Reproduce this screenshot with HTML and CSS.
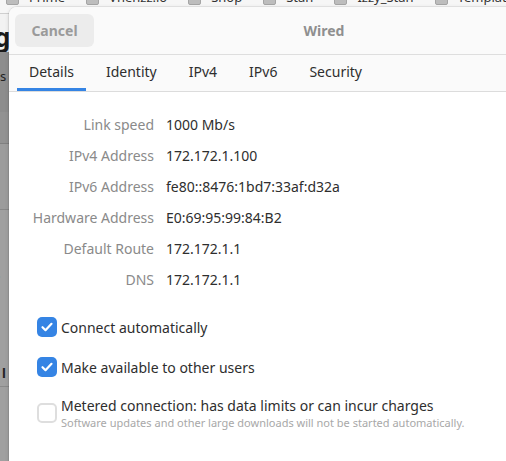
FILE: index.html
```html
<!DOCTYPE html>
<html>
<head>
<meta charset="utf-8">
<link rel="stylesheet" href="styles.css">
</head>
<body>
<div class="desk">
  <div class="bookmarks">
    <span class="bm"><i class="bm-icon"></i><span class="bm-text">Prime</span></span>
    <span class="bm"><i class="bm-icon"></i><span class="bm-text">Vhenzz.io</span></span>
    <span class="bm"><i class="bm-icon"></i><span class="bm-text">Shop</span></span>
    <span class="bm"><i class="bm-icon"></i><span class="bm-text">Stan</span></span>
    <span class="bm"><i class="bm-icon"></i><span class="bm-text">Izzy_Stan</span></span>
    <span class="bm"><i class="bm-icon"></i><span class="bm-text">Templates</span></span>
  </div>
  <div class="side">
    <div class="side-a"><span class="side-big">g</span></div>
    <div class="side-b"><span class="side-small">gs</span></div>
    <div class="side-c"></div>
    <div class="side-d"></div>
    <div class="side-e"><span class="side-small">s</span></div>
    <div class="side-f"><span class="side-small">l</span></div>
    <div class="side-g"></div>
  </div>

  <div class="dialog">
    <header class="header">
      <button class="cancel">Cancel</button>
      <div class="title">Wired</div>
    </header>
    <nav class="tabs">
      <span class="tab active">Details</span>
      <span class="tab">Identity</span>
      <span class="tab">IPv4</span>
      <span class="tab">IPv6</span>
      <span class="tab">Security</span>
    </nav>
    <main class="content">
      <div class="info">
        <span class="label">Link speed</span><span class="value">1000 Mb/s</span>
        <span class="label">IPv4 Address</span><span class="value">172.172.1.100</span>
        <span class="label">IPv6 Address</span><span class="value">fe80::8476:1bd7:33af:d32a</span>
        <span class="label">Hardware Address</span><span class="value">E0:69:95:99:84:B2</span>
        <span class="label">Default Route</span><span class="value">172.172.1.1</span>
        <span class="label">DNS</span><span class="value">172.172.1.1</span>
      </div>
      <div class="checks">
        <label class="check">
          <span class="box checked"><svg viewBox="0 0 20 20" width="20" height="20"><path d="M5.5 10.2l3 3 6-6.4" fill="none" stroke="#fff" stroke-width="2.2" stroke-linecap="round" stroke-linejoin="round"/></svg></span>
          <span class="check-text">Connect automatically</span>
        </label>
        <label class="check">
          <span class="box checked"><svg viewBox="0 0 20 20" width="20" height="20"><path d="M5.5 10.2l3 3 6-6.4" fill="none" stroke="#fff" stroke-width="2.2" stroke-linecap="round" stroke-linejoin="round"/></svg></span>
          <span class="check-text">Make available to other users</span>
        </label>
        <label class="check metered">
          <span class="box"></span>
          <span class="check-body">
            <span class="check-text">Metered connection: has data limits or can incur charges</span>
            <span class="check-sub">Software updates and other large downloads will not be started automatically.</span>
          </span>
        </label>
      </div>
    </main>
  </div>
</div>
</body>
</html>
```

FILE: styles.css
```css
* { box-sizing: border-box; }
html, body { margin: 0; padding: 0; }
body {
  width: 506px;
  height: 461px;
  overflow: hidden;
  font-family: "Noto Sans", "DejaVu Sans", sans-serif;
  background: #9e9e9e;
}
.desk {
  position: relative;
  width: 506px;
  height: 461px;
  overflow: hidden;
  background: #9e9e9e;
}
.bookmarks {
  height: 14px;
  background: #f6f6f6;
  border-bottom: 1px solid #cfcfcf;
  display: flex;
  gap: 21px;
  padding-left: 6px;
  overflow: hidden;
  white-space: nowrap;
}
.bm {
  display: flex;
  gap: 10px;
  align-items: flex-start;
  flex: none;
}
.bm-icon {
  display: block;
  width: 13px;
  height: 12px;
  margin-top: -7px;
  border-radius: 2px;
  background: #bdbdbd;
  border: 1px solid #a5a5a5;
}
.bm-text {
  display: block;
  font-size: 13px;
  line-height: 14px;
  margin-top: -10px;
  color: #333;
}
.side {
  width: 9px;
  overflow: hidden;
  display: flex;
  flex-direction: column;
}
.side > div { overflow: hidden; white-space: nowrap; flex: none; }
.side-a { height: 38px; background: #f2f2f2; }
.side-big { display: block; font-size: 26px; font-weight: bold; line-height: 26px; margin-top: 10px; margin-left: -6px; color: #1a1a1a; }
.side-b { height: 60px; background: #8d8d8d; }
.side-small { display: block; font-size: 13px; line-height: 16px; color: #222; margin-left: -7px; }
.side-b .side-small { margin-top: 16px; margin-left: -8px; }
.side-c { height: 32px; background: #929292; border-bottom: 1px solid #808080; }
.side-d { height: 66px; background: #9c9c9c; border-bottom: 1px solid #888; }
.side-e { height: 80px; background: #a0a0a0; }
.side-e .side-small { margin-top: 56px; margin-left: -6px; }
.side-f { height: 97px; background: #a0a0a0; border-bottom: 1px solid #8a8a8a; }
.side-f .side-small { margin-top: 75px; margin-left: 2px; font-weight: bold; }
.side-g { height: 100px; background: #a0a0a0; }

.dialog {
  position: absolute;
  left: 9px;
  top: 7px;
  width: 630px;
  height: 480px;
  background: #ffffff;
  border-radius: 8px 8px 0 0;
  box-shadow: 0 0 0 1px rgba(0,0,0,0.06), 0 1px 4px rgba(0,0,0,0.15);
  overflow: hidden;
}
.header {
  height: 48px;
  background: #fafafa;
  border-bottom: 1px solid #dedede;
  display: grid;
  grid-template-columns: 1fr auto 1fr;
  align-items: center;
  padding: 0 6px;
}
.cancel {
  justify-self: start;
  width: 79px;
  height: 33px;
  border: none;
  border-radius: 6px;
  background: #ececec;
  color: #9a9a9a;
  font-family: inherit;
  font-size: 14px;
  font-weight: bold;
  padding: 0;
}
.title {
  color: #8f8f8f;
  font-size: 14px;
  font-weight: bold;
}
.tabs {
  height: 37px;
  background: #fafafa;
  border-bottom: 1px solid #dcdcdc;
  display: flex;
  gap: 8px;
  padding-left: 8px;
}
.tab {
  padding: 0 12px;
  font-size: 14px;
  color: #2e2e2e;
  line-height: 34px;
  height: 36px;
  border-bottom: 3px solid transparent;
}
.tab.active { border-bottom-color: #3584e4; }
.content {
  padding-top: 17px;
}
.info {
  display: grid;
  grid-template-columns: 145px auto;
  column-gap: 12px;
  grid-auto-rows: 31px;
  align-items: center;
  font-size: 14px;
}
.label { justify-self: end; color: #8a8a8a; }
.value { color: #2e2e2e; }
.checks {
  padding-left: 28px;
  padding-top: 22px;
  display: flex;
  flex-direction: column;
}
.check {
  display: flex;
  align-items: center;
  gap: 4px;
  font-size: 14px;
  color: #2e2e2e;
  height: 20px;
  margin-bottom: 20px;
}
.check.metered {
  margin-top: 6px;
  align-items: flex-start;
  height: auto;
}
.box {
  width: 20px;
  height: 20px;
  border-radius: 5px;
  border: 2px solid #dedede;
  background: #fff;
  flex: none;
  display: block;
}
.box.checked {
  border: none;
  background: #3584e4;
}
.box svg { display: block; }
.check-body {
  display: flex;
  flex-direction: column;
  margin-top: -7px;
}
.check-body .check-text { line-height: 20px; }
.check-sub {
  font-size: 11px;
  color: #a8a8a8;
  line-height: 14px;
}
```
